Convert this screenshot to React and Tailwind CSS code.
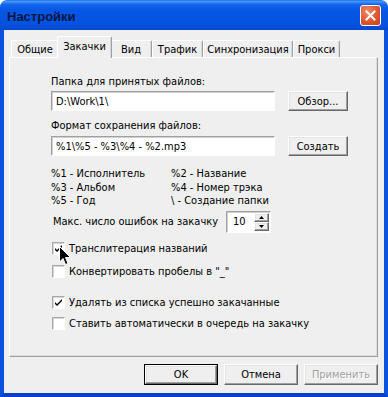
import React from "react";

const font = { fontFamily: "Tahoma, 'DejaVu Sans Condensed', 'Liberation Sans', sans-serif" };

function Check() {
  return (
    <svg width="9" height="9" viewBox="0 0 9 9" className="block">
      <path d="M1 4 L3 6 L8 1 L8 3 L3 8 L1 6 Z" fill="#000" />
    </svg>
  );
}

function CheckRow({ checked, label, className = "" }) {
  return (
    <div className={"flex items-center h-[13px] pl-[1px] " + className}>
      <div className="w-[13px] h-[13px] bg-white border border-t-[#a8a8a8] border-l-[#a8a8a8] border-b-white border-r-white shadow-[inset_1px_1px_0_#d6d6d6] flex items-center justify-center">
        {checked && <Check />}
      </div>
      <span className="ml-[4px] text-[11px] leading-[13px] text-black whitespace-nowrap">{label}</span>
    </div>
  );
}

const raised =
  "bg-[#efefef] border border-t-white border-l-white border-b-[#696969] border-r-[#696969] shadow-[inset_-1px_-1px_0_#a0a0a0,inset_1px_1px_0_#e3e3e3]";
const sunken =
  "bg-white border border-t-[#a0a0a0] border-l-[#a0a0a0] border-b-white border-r-white shadow-[inset_1px_1px_0_#d0d0d0]";

function Tab({ label, w, selected }) {
  if (selected) {
    return (
      <div
        className={"relative z-10 -mx-[2px] h-[22px] mb-[-1px] bg-[#efefef] border-t border-l border-t-white border-l-white border-r border-r-[#a0a0a0] rounded-t-[2px] flex justify-center pt-[3px] text-[11px] leading-[13px] shadow-[inset_-1px_0_0_#d8d8d8]"}
        style={{ width: w + 4 }}
      >
        {label}
      </div>
    );
  }
  return (
    <div
      className="h-[17px] border-t border-l border-t-white border-l-white border-r border-r-[#a0a0a0] rounded-t-[2px] flex justify-center pt-[2px] text-[11px] leading-[13px] shadow-[inset_-1px_0_0_#d8d8d8]"
      style={{ width: w }}
    >
      {label}
    </div>
  );
}

export default function App() {
  return (
    <div className="w-[388px] h-[397px] relative flex flex-col text-black select-none" style={font}>
      {/* Title bar */}
      <div className="h-[30px] rounded-t-[7px] bg-[linear-gradient(to_bottom,#4d9cf9_0%,#1466ee_12%,#0758e6_30%,#0554e2_60%,#0551dc_85%,#0447d0_100%)] flex items-center pl-[7px] pr-[7px] border-t border-[#2f7bf3]">
        <span className="text-[13px] font-bold text-[#0a163f] leading-none pt-[1px]" style={{ fontFamily: "'Trebuchet MS', 'Liberation Sans', sans-serif", color: "#0a163f" }}>
          Настройки
        </span>
        <div className="ml-auto w-[21px] h-[21px] rounded-[3px] border border-white bg-[radial-gradient(circle_at_35%_30%,#f08a68_0%,#e0552f_55%,#c4401f_100%)] flex items-center justify-center">
          <svg width="11" height="11" viewBox="0 0 11 11">
            <path d="M1.5 1.5 L9.5 9.5 M9.5 1.5 L1.5 9.5" stroke="#fff" strokeWidth="2" strokeLinecap="square" />
          </svg>
        </div>
      </div>

      {/* Body */}
      <div className="flex-1 flex flex-col bg-[#efefef] border-l-4 border-r-4 border-b-4 border-l-[#0a52e0] border-r-[#0a52e0] border-b-[#0a3fcc] pt-[6px] pl-[5px] pr-[6px]">
        {/* Tabs */}
        <div className="h-[21px] flex items-end pl-[2px]">
          <Tab label="Общие" w={48} />
          <Tab label="Закачки" w={51} selected />
          <Tab label="Вид" w={42} />
          <Tab label="Трафик" w={51} />
          <Tab label="Синхронизация" w={90} />
          <Tab label="Прокси" w={47} />
        </div>

        {/* Panel */}
        <div className="h-[300px] border border-t-white border-l-white border-b-[#a0a0a0] border-r-[#a0a0a0] shadow-[inset_-1px_-1px_0_#dcdcdc] pl-[41px] flex flex-col text-[11px]">
          <div className="mt-[17px] leading-[13px] h-[13px]">Папка для принятых файлов:</div>
          <div className="mt-[3px] flex items-start">
            <div className={"w-[224px] h-[20px] flex items-center pl-[4px] leading-[13px] " + sunken}>D:\Work\1\</div>
            <div className={"ml-[13px] w-[60px] h-[20px] flex items-center justify-center leading-[13px] " + raised}>Обзор...</div>
          </div>
          <div className="mt-[8px] leading-[13px] h-[13px]">Формат сохранения файлов:</div>
          <div className="mt-[4px] flex items-start">
            <div className={"w-[224px] h-[20px] flex items-center pl-[4px] leading-[13px] " + sunken}>%1\%5 - %3\%4 - %2.mp3</div>
            <div className={"ml-[13px] w-[60px] h-[20px] flex items-center justify-center leading-[13px] " + raised}>Создать</div>
          </div>

          <div className="mt-[11px] grid grid-cols-[120px_auto] leading-[13.5px]">
            <div>%1 - Исполнитель</div>
            <div>%2 - Название</div>
            <div>%3 - Альбом</div>
            <div>%4 - Номер трэка</div>
            <div>%5 - Год</div>
            <div>\ - Создание папки</div>
          </div>

          <div className="mt-[3px] flex items-center h-[22px]">
            <div className="w-[175px] pl-[2px] leading-[13px] whitespace-nowrap">Макс. число ошибок на закачку</div>
            <div className={"w-[45px] h-[22px] flex items-center pl-[6px] " + sunken}>
              <span className="leading-[13px]">10</span>
              <div className="ml-auto mr-[1px] flex flex-col w-[15px] h-[18px]">
                <div className={"h-[9px] flex items-center justify-center " + raised}>
                  <svg width="5" height="3" viewBox="0 0 5 3"><path d="M2.5 0 L5 3 L0 3 Z" fill="#000" /></svg>
                </div>
                <div className={"h-[9px] flex items-center justify-center " + raised}>
                  <svg width="5" height="3" viewBox="0 0 5 3"><path d="M0 0 L5 0 L2.5 3 Z" fill="#000" /></svg>
                </div>
              </div>
            </div>
          </div>

          <CheckRow className="mt-[9px]" checked label="Транслитерация названий" />
          <CheckRow className="mt-[10px]" label={'Конвертировать пробелы в "_"'} />
          <CheckRow className="mt-[18px]" checked label="Удалять из списка успешно закачанные" />
          <CheckRow className="mt-[8px]" label="Ставить автоматически в очередь на закачку" />
        </div>

        {/* Buttons */}
        <div className="mt-[7px] flex justify-end gap-[6px] text-[11px]">
          <div className="w-[74px] h-[21px] border border-black">
            <div className={"w-full h-full flex items-center justify-center leading-[13px] " + raised}>OK</div>
          </div>
          <div className={"w-[74px] h-[21px] flex items-center justify-center leading-[13px] " + raised}>Отмена</div>
          <div className={"w-[74px] h-[21px] flex items-center justify-center leading-[13px] text-[#a0a0a0] " + raised} style={{ textShadow: "1px 1px 0 #fff" }}>
            Применить
          </div>
        </div>
      </div>

      {/* Mouse cursor */}
      <svg className="absolute left-[59px] top-[246px]" width="13" height="20" viewBox="0 0 13 20">
        <path d="M0.5 0.5 L0.5 16 L4 12.5 L6.5 18.5 L9 17.5 L6.5 11.5 L11.5 11.5 Z" fill="#000" stroke="#fff" strokeWidth="1" />
      </svg>
    </div>
  );
}
